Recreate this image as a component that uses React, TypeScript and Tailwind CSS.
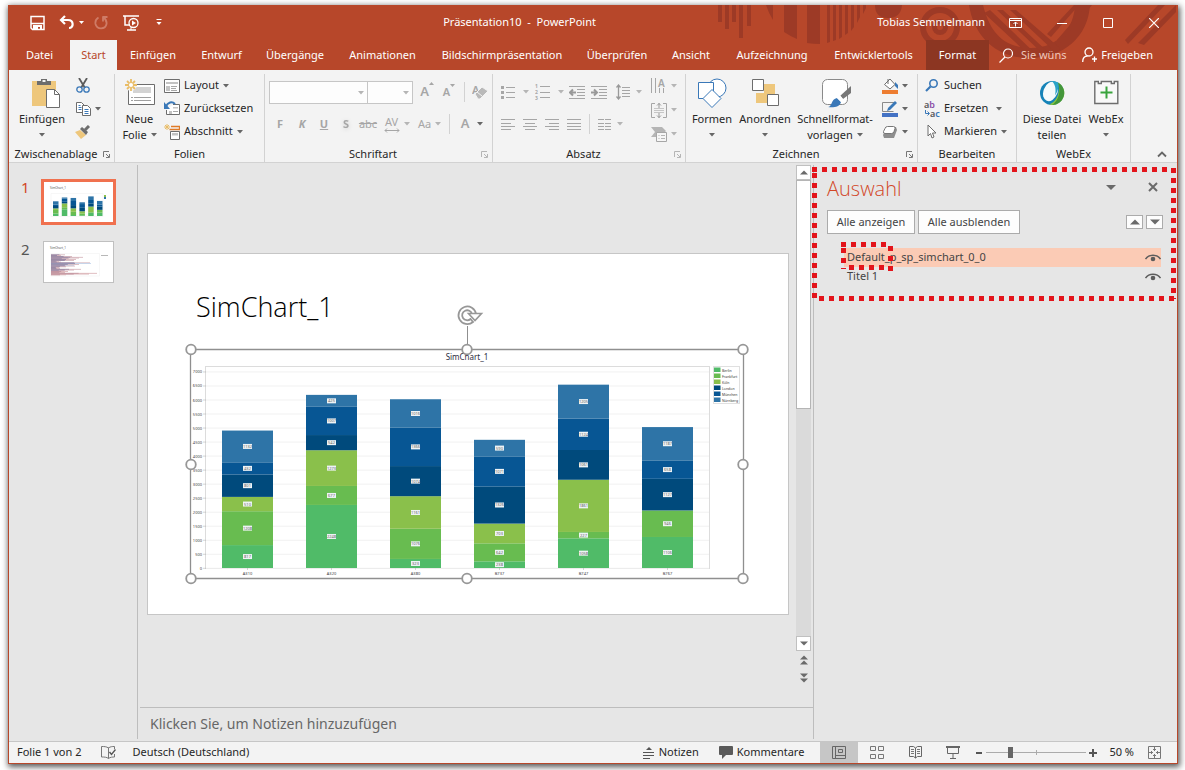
import React from 'react';
import clsx from 'clsx';

type IconProps = { w: number; h: number; children: React.ReactNode; className?: string };

function Icon({ w, h, children, className }: IconProps) {
  return (
    <svg width={w} height={h} viewBox={`0 0 ${w} ${h}`} fill="none" className={clsx('shrink-0', className)} aria-hidden="true">
      {children}
    </svg>
  );
}

function Caret({ className = 'text-[#666]' }: { className?: string }) {
  return (
    <Icon w={6} h={4} className={className}>
      <path d="M0 0h6L3 3.5z" fill="currentColor" />
    </Icon>
  );
}

/* ---------- Title bar ---------- */

function HeaderArt() {
  return (
    <svg className="absolute right-0 top-0 pointer-events-none" width="463" height="59" viewBox="715 5 463 59" fill="#9d3a26" aria-hidden="true">
      <path d="M719 5h4v17h-4zM726 5h4v24h-4zM733 5h4v17h-4zM740 5h4v33h-4zM748 5h4v21h-4z" />
      <path d="M767 5h7v15q-4-6-7-15zM785 5h13v34q-7-3-13-7zM808 5h13v39q-7 0-13-1z" />
      <path d="M828 5h3v37l-3 1zM834 5h3v35l-3 1zM840 5h3v32l-3 2zM846 5h3v28l-3 2zM852 5h3v22l-3 4zM858 5h3v12l-3 6zM864 5h3v3l-3 6z" />
      <path d="M876 5h27q-1 13-14 13T876 5z" />
      <circle cx="941" cy="27" r="17" fill="none" stroke="#9d3a26" strokeWidth="6" />
      <circle cx="941" cy="27" r="8" />
      <circle cx="941" cy="27" r="3" fill="#b7472a" />
      <path d="M970 5h14c6 24 18 42 46 43 29 1 45-20 46-43h15c-2 32-26 53-61 53-33 0-55-22-60-53z" />
      <path d="M985 13l6-3 48 46h-8zM998 10h6l47 44h-7zM1011 10h6l45 39-6 3z" />
      <path d="M1048 34l27-29h5l-28 32zM1058 40l30-35h5l-32 38z" />
      <path d="M1126 40l33-35h7l-37 39zM1139 43l38-38v7l-32 33z" />
    </svg>
  );
}

function TitleBar() {
  return (
    <div className="relative flex h-[35px] items-center text-[11px] text-white">
      <div className="flex items-center pl-5">
        <button aria-label="Speichern" className="w-[30px]">
          <Icon w={16} h={16}>
            <path d="M2 1.5h13v13H3.500L2 13z" stroke="#fff" strokeWidth="1.500" />
            <path d="M2 8.500h13" stroke="#fff" strokeWidth="1.500" />
            <path d="M4 10h9v5h-2v-3H9v3H4z" fill="#fff" />
          </Icon>
        </button>
        <button aria-label="Rückgängig" className="flex w-[35px] items-center gap-1">
          <Icon w={16} h={15}>
            <path d="M6 1L2 5l4 4M2.500 5H9c6 0 6 8 1 8" stroke="#fff" strokeWidth="2.200" />
          </Icon>
          <Icon w={6} h={3}>
            <path d="M0 0h5L2.500 3z" fill="#fff" />
          </Icon>
        </button>
        <button aria-label="Wiederholen" className="w-7">
          <Icon w={15} h={15}>
            <path d="M4.500 2.500C2 4 1 6 1.500 9c1.500 6 10 5.500 11 0 .5-3-1-5-3-6.500M9 1.500v5M8.500 2h5" stroke="#cf7b66" strokeWidth="1.800" />
          </Icon>
        </button>
        <button aria-label="Von Beginn an" className="w-[34px]">
          <Icon w={18} h={16}>
            <path d="M1 1h16M3 1v9h5M5 15h9" stroke="#fff" strokeWidth="1.500" />
            <circle cx="11.500" cy="8" r="4.500" stroke="#fff" strokeWidth="1.300" />
            <path d="M10 5.500L14 8l-4 2.500z" fill="#fff" />
            <path d="M9 12v3" stroke="#fff" />
          </Icon>
        </button>
        <button aria-label="Symbolleiste anpassen">
          <Icon w={6} h={7}>
            <path d="M.5.5h5" stroke="#fff" />
            <path d="M.5 3h5L3 6z" fill="#fff" />
          </Icon>
        </button>
      </div>
      <h1 className="flex-1 whitespace-pre text-center">Präsentation10  -  PowerPoint</h1>
      <div className="flex items-center justify-end">
        <span className="mr-2">Tobias Semmelmann</span>
        <button aria-label="Menüband-Anzeigeoptionen" className="flex w-[46px] justify-center">
          <Icon w={14} h={12}>
            <path d="M.5 1.500h12v9H.5zM.5 3.500h12M6.500 9.500V5M4.500 7l2-2 2 2" stroke="#fff" />
          </Icon>
        </button>
        <button aria-label="Minimieren" className="flex w-[46px] justify-center">
          <Icon w={10} h={10}>
            <path d="M0 5.500h10" stroke="#fff" />
          </Icon>
        </button>
        <button aria-label="Maximieren" className="flex w-[46px] justify-center">
          <Icon w={10} h={10}>
            <path d="M.5.5h9v9h-9z" stroke="#fff" />
          </Icon>
        </button>
        <button aria-label="Schließen" className="flex w-[46px] justify-center">
          <Icon w={10} h={10}>
            <path d="M0 0l10 10M10 0L0 10" stroke="#fff" strokeWidth="1.200" />
          </Icon>
        </button>
      </div>
    </div>
  );
}

const tabs = [
  { label: 'Datei', cls: 'w-[61px] text-white' },
  { label: 'Start', cls: 'w-[47px] bg-[#f3f3f3] text-[#b7472a]' },
  { label: 'Einfügen', cls: 'w-[72px] text-white' },
  { label: 'Entwurf', cls: 'w-[65px] text-white' },
  { label: 'Übergänge', cls: 'w-[82px] text-white' },
  { label: 'Animationen', cls: 'w-[93px] text-white' },
  { label: 'Bildschirmpräsentation', cls: 'w-[146px] text-white' },
  { label: 'Überprüfen', cls: 'w-[84px] text-white' },
  { label: 'Ansicht', cls: 'w-[64px] text-white' },
  { label: 'Aufzeichnung', cls: 'w-[98px] text-white' },
  { label: 'Entwicklertools', cls: 'w-[105px] text-white' },
  { label: 'Format', cls: 'w-[63px] bg-[#8c3622] text-white' },
];

function TabRow() {
  return (
    <nav className="relative flex h-[30px] items-stretch text-[11px]">
      {tabs.map((t) => (
        <button key={t.label} className={clsx('shrink-0 whitespace-nowrap', t.cls)}>
          {t.label}
        </button>
      ))}
      <button className="ml-2.5 flex items-center gap-2 whitespace-nowrap text-[#f0c8bc]">
        <Icon w={14} h={15}>
          <circle cx="9" cy="5.500" r="4.500" stroke="#fff" strokeWidth="1.200" />
          <path d="M6 9l-5.500 5.500" stroke="#fff" strokeWidth="1.300" />
        </Icon>
        Sie wüns
      </button>
      <button className="ml-auto mr-6 flex items-center gap-1 whitespace-nowrap text-white">
        <Icon w={15} h={16}>
          <circle cx="7" cy="5" r="4" stroke="#fff" strokeWidth="1.300" />
          <path d="M.7 15c0-4 2-6 5-6M10 12h5M12.500 9.500v5.500" stroke="#fff" strokeWidth="1.300" />
        </Icon>
        Freigeben
      </button>
    </nav>
  );
}

/* ---------- Ribbon ---------- */

function Group({ label, width, launcher, muted, children }: { label: string; width: string; launcher?: boolean; muted?: boolean; children: React.ReactNode }) {
  return (
    <section className={clsx('flex shrink-0 flex-col border-r border-[#d2d2d2]', width)}>
      <div className="flex h-[72px] items-start">{children}</div>
      <div className="flex h-4 items-center text-[#262626]">
        <span className="flex-1 text-center leading-4">{label}</span>
        {launcher && (
          <button aria-label={`${label} – Optionen`} className="mr-1">
            <Icon w={7} h={7} className={muted ? 'text-[#b5b5b5]' : 'text-[#777]'}>
              <path d="M.5 6V.5H6M3 3l3 3M6.500 3v3.500H3" stroke="currentColor" />
            </Icon>
          </button>
        )}
      </div>
    </section>
  );
}

function BigButton({ icon, lines, caret, width }: { icon: React.ReactNode; lines: string[]; caret?: 'below' | 'inline'; width: string }) {
  return (
    <button className={clsx('flex shrink-0 flex-col items-center whitespace-nowrap text-[#262626]', width)}>
      <span className="flex h-[37px] items-center justify-center">{icon}</span>
      {lines.map((line, i) => (
        <span key={line} className="flex h-4 items-center gap-1 leading-4">
          {line}
          {caret === 'inline' && i === lines.length - 1 && <Caret />}
        </span>
      ))}
      {caret === 'below' && (
        <span className="flex h-4 items-center">
          <Caret />
        </span>
      )}
    </button>
  );
}

function SmallButton({ icon, label, caret, name }: { icon: React.ReactNode; label?: string; caret?: boolean; name?: string }) {
  return (
    <button aria-label={name} className="flex h-[23px] items-center gap-1 whitespace-nowrap text-[#262626]">
      <span className="flex w-4 justify-center">{icon}</span>
      {label}
      {caret && <Caret />}
    </button>
  );
}

function Tool({ name, width = 'w-[22px]', children }: { name: string; width?: string; children: React.ReactNode }) {
  return (
    <button aria-label={name} className={clsx('flex h-6 shrink-0 items-center justify-center gap-1 text-[#a6a6a6]', width)}>
      {children}
    </button>
  );
}

function Divider() {
  return <span className="mx-1 h-5 w-px shrink-0 bg-[#d2d2d2]" />;
}

function ClipboardGroup() {
  return (
    <Group label="Zwischenablage" width="w-[106px]" launcher>
      <BigButton
        width="w-[66px]"
        caret="below"
        lines={['Einfügen']}
        icon={
          <Icon w={30} h={31} className="ml-2">
            <path d="M1 4h24v25H1z" fill="#eec77c" />
            <path d="M6 8V4h4V2h6v2h4v4z" fill="#6d6d6d" />
            <path d="M11.500 3h3v2h-3z" fill="#f3f3f3" />
            <path d="M15.500 12.500h8l5 5v13h-13z" fill="#fff" stroke="#6d6d6d" />
            <path d="M23.500 12.500v5h5" stroke="#6d6d6d" />
          </Icon>
        }
      />
      <div className="flex flex-col items-start">
        <SmallButton
          name="Ausschneiden"
          icon={
            <Icon w={14} h={15}>
              <path d="M3 0l6 10M11 0L5 10" stroke="#5c5c5c" strokeWidth="1.800" />
              <circle cx="3.500" cy="11.500" r="2.700" stroke="#3a78b8" strokeWidth="1.300" />
              <circle cx="10.500" cy="11.500" r="2.700" stroke="#3a78b8" strokeWidth="1.300" />
            </Icon>
          }
        />
        <div className="flex items-center gap-1">
          <SmallButton
            name="Kopieren"
            icon={
              <Icon w={15} h={14}>
                <path d="M.5.5h5l3 3v7h-8z" fill="#fff" stroke="#6d6d6d" />
                <path d="M2.500 3.500h2M2.500 5.500h3M2.500 7.500h3" stroke="#3a78b8" />
                <path d="M6.500 3.500h5l3 3v7h-8z" fill="#fff" stroke="#6d6d6d" />
                <path d="M8.500 7.500h4M8.500 9.500h4M8.500 11.500h4" stroke="#3a78b8" />
              </Icon>
            }
          />
          <Caret />
        </div>
        <SmallButton
          name="Format übertragen"
          icon={
            <Icon w={16} h={14}>
              <path d="M0 7l5-2 6 5-5 4z" fill="#eec77c" />
              <path d="M5 4l2-2 6 5-2 3z" fill="#6d6d6d" />
              <path d="M10 5l4-4" stroke="#6d6d6d" strokeWidth="3" />
            </Icon>
          }
        />
      </div>
    </Group>
  );
}

function SlidesGroup() {
  return (
    <Group label="Folien" width="w-[150px]">
      <BigButton
        width="w-[49px]"
        caret="inline"
        lines={['Neue', 'Folie']}
        icon={
          <Icon w={30} h={29}>
            <path d="M3.500 6.500h26v20h-26z" fill="#fff" stroke="#6d6d6d" />
            <path d="M8 9h18v6H8z" fill="#d3d3d3" />
            <path d="M6 19.500h2M9 19.500h17M6 22.500h2M9 22.500h17" stroke="#a0a0a0" />
            <circle cx="6" cy="7" r="6" fill="#f3f3f3" />
            <path d="M6 1v12M0 7h12M2 3l8 8M10 3l-8 8" stroke="#e9bd68" strokeWidth="1.800" />
            <circle cx="6" cy="7" r="2" fill="#fff" />
          </Icon>
        }
      />
      <div className="flex flex-col items-start">
        <SmallButton
          label="Layout"
          caret
          icon={
            <Icon w={16} h={14}>
              <path d="M.5.5h15v13H.5z" fill="#fff" stroke="#6d6d6d" />
              <path d="M2 3h12v2H2zM2 7h4v5H2z" fill="#c3c3c3" />
              <path d="M7 7.500h6M7 9.500h5M7 11.500h6" stroke="#a8a8a8" />
            </Icon>
          }
        />
        <SmallButton
          label="Zurücksetzen"
          icon={
            <Icon w={16} h={15}>
              <path d="M9 3.500h6.500v10h-13V9" fill="#fff" stroke="#6d6d6d" />
              <path d="M5 10h3v3H5zM9 6h5v1.500H9z" fill="#c3c3c3" />
              <path d="M9 10.500h5" stroke="#a8a8a8" />
              <path d="M1.500 6C4 1 8 0 11 3" stroke="#3a78b8" strokeWidth="2" />
              <path d="M0 1v7h6z" fill="#3a78b8" />
            </Icon>
          }
        />
        <SmallButton
          label="Abschnitt"
          caret
          icon={
            <Icon w={16} h={16}>
              <path d="M3 0v6M0 3h6M1 1l4 4M5 1L1 5" stroke="#e9bd68" />
              <path d="M7 2.500h8.500v3H5.500" stroke="#e07a26" strokeWidth="1.300" />
              <path d="M6.500 7.500h9v8h-9z" fill="#fff" stroke="#6d6d6d" />
              <path d="M8 9h6v2.500H8z" fill="#c3c3c3" />
            </Icon>
          }
        />
      </div>
    </Group>
  );
}

function FontGroup() {
  return (
    <Group label="Schriftart" width="w-[228px]" launcher muted>
      <div className="flex w-full flex-col pl-1">
        <div className="flex h-9 items-center">
          {['Schriftart', 'Schriftgrad'].map((name, i) => (
            <label key={name} className={clsx('relative -mr-px h-[23px] shrink-0', i ? 'w-[46px]' : 'w-[99px]')}>
              <select aria-label={name} disabled className="h-full w-full appearance-none border border-[#c6c6c6] bg-[#fdfdfd]" />
              <Caret className="absolute right-1 top-2.5 text-[#b5b5b5]" />
            </label>
          ))}
          <Tool name="Schriftgrad vergrößern" width="ml-1 w-[22px]">
            <span className="flex text-[13px] font-semibold">
              A<Icon w={5} h={4}><path d="M0 3h5L2.500 0z" fill="#a6a6a6" /></Icon>
            </span>
          </Tool>
          <Tool name="Schriftgrad verkleinern">
            <span className="flex text-[11px] font-semibold">
              A<Icon w={5} h={4}><path d="M0 0h5L2.500 3z" fill="#a6a6a6" /></Icon>
            </span>
          </Tool>
          <Divider />
          <Tool name="Formatierung löschen">
            <Icon w={17} h={22}>
              <text x="0" y="13" fontSize="11" fontWeight="600" fill="#a6a6a6" fontFamily="Noto Sans">A</text>
              <path d="M3 13l7-7 6 4-8 8H6z" fill="#b9b9b9" stroke="#f3f3f3" />
              <path d="M5 11l5 4" stroke="#f3f3f3" />
            </Icon>
          </Tool>
        </div>
        <div className="flex h-7 items-center text-[#a6a6a6]">
          <Tool name="Fett"><b>F</b></Tool>
          <Tool name="Kursiv"><b className="italic">K</b></Tool>
          <Tool name="Unterstrichen"><b className="underline">U</b></Tool>
          <Tool name="Schatten"><b className="drop-shadow-sm">S</b></Tool>
          <Tool name="Durchgestrichen"><s>abc</s></Tool>
          <Tool name="Zeichenabstand" width="w-[35px]">
            <span className="flex flex-col items-center leading-3">
              AV
              <Icon w={16} h={5}><path d="M1 2.500h14M3 .5l-2 2 2 2M13 .5l2 2-2 2" stroke="#a6a6a6" /></Icon>
            </span>
            <Caret className="text-[#b5b5b5]" />
          </Tool>
          <Tool name="Groß-/Kleinschreibung" width="w-[31px]">
            <span>Aa</span>
            <Caret className="text-[#b5b5b5]" />
          </Tool>
          <Divider />
          <Tool name="Schriftfarbe" width="w-[36px]">
            <span className="text-[13px] font-semibold">A</span>
            <Caret className="ml-1 text-[#666]" />
          </Tool>
        </div>
      </div>
    </Group>
  );
}

const alignments = [
  { name: 'Linksbündig', d: 'M0 .5h14M0 4.500h10M0 7.500h14M0 10.500h10' },
  { name: 'Zentriert', d: 'M0 .5h14M2 4.500h10M0 7.500h14M2 10.500h10' },
  { name: 'Rechtsbündig', d: 'M0 .5h14M4 4.500h10M0 7.500h14M4 10.500h10' },
  { name: 'Blocksatz', d: 'M0 .5h14M0 4.500h14M0 7.500h14M0 10.500h14' },
];

function ParagraphGroup() {
  return (
    <Group label="Absatz" width="w-[193px]" launcher muted>
      <div className="flex w-[158px] flex-col pl-1">
        <div className="flex h-9 items-center">
          <Tool name="Aufzählung" width="w-[35px]">
            <Icon w={14} h={15}>
              <path d="M5 2.500h9M5 7.500h9M5 12.500h9" stroke="#a6a6a6" />
              <path d="M0 1h3v3H0zM0 6h3v3H0zM0 11h3v3H0z" fill="#a6a6a6" />
            </Icon>
            <Caret className="ml-1 text-[#b5b5b5]" />
          </Tool>
          <Tool name="Nummerierung" width="w-[34px]">
            <Icon w={15} h={22}>
              <path d="M5 5.500h10M5 11.500h10M5 16.500h10" stroke="#a6a6a6" />
              <g fontSize="5" fontWeight="700" fill="#a6a6a6" fontFamily="Noto Sans">
                <text x="0" y="7">1</text>
                <text x="0" y="13">2</text>
                <text x="0" y="19">3</text>
              </g>
            </Icon>
            <Caret className="ml-1 text-[#b5b5b5]" />
          </Tool>
          <Tool name="Einzug verkleinern">
            <Icon w={16} h={13}>
              <path d="M0 .5h16M8 3.500h8M8 6.500h8M8 9.500h8M0 12.500h16" stroke="#a6a6a6" />
              <path d="M7 6.500H2M4 3.500l-3 3 3 3" stroke="#999" strokeWidth="2" />
            </Icon>
          </Tool>
          <Tool name="Einzug vergrößern">
            <Icon w={16} h={13}>
              <path d="M0 .5h16M8 3.500h8M8 6.500h8M8 9.500h8M0 12.500h16" stroke="#a6a6a6" />
              <path d="M0 6.500h5M3 3.500l3 3-3 3" stroke="#999" strokeWidth="2" />
            </Icon>
          </Tool>
          <Tool name="Zeilenabstand" width="w-[37px]">
            <Icon w={14} h={16}>
              <path d="M6 3.500h8M6 6.500h8M6 9.500h8M6 12.500h8" stroke="#a6a6a6" />
              <path d="M2.500 1v14M.5 3.500l2-2.500 2 2.500M.5 12.500l2 2.500 2-2.500" stroke="#999" strokeWidth="1.300" />
            </Icon>
            <Caret className="ml-0.5 text-[#b5b5b5]" />
          </Tool>
        </div>
        <div className="flex h-7 items-center">
          {alignments.map((a) => (
            <Tool key={a.name} name={a.name}>
              <Icon w={14} h={11}>
                <path d={a.d} stroke="#a6a6a6" />
              </Icon>
            </Tool>
          ))}
          <Divider />
          <Tool name="Spalten" width="w-[32px]">
            <Icon w={13} h={11}>
              <path d="M0 .5h6M7 .5h6M0 4.500h6M7 4.500h6M0 7.500h6M7 7.500h6M0 10.500h6M7 10.500h6" stroke="#a6a6a6" />
            </Icon>
            <Caret className="ml-0.5 text-[#b5b5b5]" />
          </Tool>
        </div>
      </div>
      <div className="flex flex-col">
        <Tool name="Textrichtung" width="w-[26px]">
          <Icon w={16} h={22}>
            <path d="M.5 3v15M4.500 3v15M8.500 13v5M12.500 13v5" stroke="#a6a6a6" />
            <text x="7" y="12" fontSize="10" fontWeight="600" fill="#a6a6a6" fontFamily="Noto Sans">A</text>
          </Icon>
          <Caret className="text-[#b5b5b5]" />
        </Tool>
        <Tool name="Text ausrichten" width="w-[26px]">
          <Icon w={16} h={15}>
            <path d="M4 .5H.5v14H4M12 .5h3.500v14H12" stroke="#a6a6a6" />
            <path d="M3 5.500h10M3 7.500h10M3 9.500h10" stroke="#c6c6c6" />
            <path d="M8 0v5M8 10v5M6 2.500L8 .5l2 2M6 12.500l2 2 2-2" stroke="#999" />
          </Icon>
          <Caret className="text-[#b5b5b5]" />
        </Tool>
        <Tool name="In SmartArt konvertieren" width="w-[26px]">
          <Icon w={16} h={15}>
            <path d="M0 0h11l4 4-3 3H5v3H0l4-5z" fill="#b5b5b5" />
            <path d="M5.500 5.500h10v9h-10z" fill="#f6f6f6" stroke="#a6a6a6" />
            <path d="M7.500 8.500h1M10 8.500h4M7.500 11.500h1M10 11.500h4" stroke="#b5b5b5" />
          </Icon>
          <Caret className="text-[#b5b5b5]" />
        </Tool>
      </div>
    </Group>
  );
}

function DrawingGroup() {
  return (
    <Group label="Zeichnen" width="w-[232px]" launcher>
      <BigButton
        width="w-[52px]"
        caret="below"
        lines={['Formen']}
        icon={
          <Icon w={30} h={30}>
            <circle cx="20" cy="10" r="9" fill="#fff" stroke="#3a78b8" />
            <path d="M1.500 4.500h15v16h-15z" fill="#fff" stroke="#3a78b8" />
            <path d="M15 11.500l9 9-9 9-9-9z" fill="#fff" stroke="#3a78b8" />
          </Icon>
        }
      />
      <BigButton
        width="w-[54px]"
        caret="below"
        lines={['Anordnen']}
        icon={
          <Icon w={27} h={28}>
            <path d="M12 5h11v10H12zM4 14h11v10H4z" fill="#eec77c" />
            <path d="M.5.5h11v11H.5zM15.500 15.500h11v11h-11z" fill="#fff" stroke="#6d6d6d" />
          </Icon>
        }
      />
      <BigButton
        width="w-[86px]"
        caret="inline"
        lines={['Schnellformat-', 'vorlagen']}
        icon={
          <Icon w={30} h={30} className="ml-1">
            <rect x=".5" y="1.500" width="25" height="25" rx="5" fill="#fff" stroke="#8a8a8a" />
            <path d="M29 8v7l-8 6-3-3z" fill="#777" />
            <path d="M6 29c4 0 3-8 9-9l4 4c-1 5-8 6-13 5z" fill="#3a78b8" />
            <path d="M15 20l3-3 3 4-2 3z" fill="#fff" />
          </Icon>
        }
      />
      <div className="flex flex-col pl-1">
        <SmallButton
          name="Fülleffekt"
          caret
          icon={
            <Icon w={16} h={16}>
              <path d="M2.500 6.500L8 1l5 5.500-5 4.500z" fill="#fff" stroke="#6d6d6d" />
              <path d="M6 6V1" stroke="#6d6d6d" />
              <path d="M13 4l3 3v4l-3-3z" fill="#3a78b8" />
              <path d="M0 12h16v4H0z" fill="#ed7d31" />
            </Icon>
          }
        />
        <SmallButton
          name="Formkontur"
          caret
          icon={
            <Icon w={16} h={16}>
              <path d="M12 1.500H.5v9h11" stroke="#8a8a8a" />
              <path d="M5 10l1-3 7-7 2 2-7 7z" fill="#3a78b8" />
              <path d="M0 12h16v4H0z" fill="#4472c4" />
            </Icon>
          }
        />
        <SmallButton
          name="Formeffekte"
          caret
          icon={
            <Icon w={16} h={14}>
              <path d="M5 2h9l1 3-3 8H2l-1-3z" fill="#8e8e8e" />
              <path d="M5.500 1.500h6q2 0 1.500 2l-1 3q-.5 2-2.500 2H3q-2 0-1.500-2l1.500-3q.5-2 2.500-2z" fill="#fff" stroke="#777" />
            </Icon>
          }
        />
      </div>
    </Group>
  );
}

function EditingGroup() {
  return (
    <Group label="Bearbeiten" width="w-[99px]">
      <div className="flex flex-col items-start pl-1.5">
        <SmallButton
          label="Suchen"
          icon={
            <Icon w={14} h={13}>
              <circle cx="8.500" cy="4.500" r="3.700" stroke="#3a78b8" strokeWidth="1.600" />
              <path d="M5.500 7.500L1 12" stroke="#3a78b8" strokeWidth="2.200" />
            </Icon>
          }
        />
        <div className="flex items-center gap-2">
          <SmallButton
            label="Ersetzen"
            icon={
              <Icon w={17} h={22}>
                <g fontSize="9" fontWeight="600" fontFamily="Noto Sans">
                  <text x="0" y="10" fill="#555">a<tspan fill="#8a4fa8">b</tspan></text>
                  <text x="6" y="19" fill="#555">a<tspan fill="#3a78b8">c</tspan></text>
                </g>
                <path d="M1.500 12v3.500H5M3.500 13.500l2 2-2 2" stroke="#3a78b8" />
              </Icon>
            }
          />
          <Caret />
        </div>
        <SmallButton
          label="Markieren"
          caret
          icon={
            <Icon w={10} h={15}>
              <path d="M1 1v11l2.500-2.500L5 14l2-1-1.500-4H9z" fill="#fff" stroke="#6d6d6d" />
            </Icon>
          }
        />
      </div>
    </Group>
  );
}

function WebExGroup() {
  return (
    <Group label="WebEx" width="w-[114px]">
      <BigButton
        width="w-[70px]"
        lines={['Diese Datei', 'teilen']}
        icon={
          <Icon w={26} h={26}>
            <circle cx="13" cy="13" r="12" fill="#1583b8" />
            <path d="M19 2.500A12 12 0 0 1 10 24.600c8-3 12-13 9-22.100z" fill="#8cc63f" />
            <path d="M19 2.500a12 12 0 0 1-6 22.500c7-5 9-14 6-22.500z" fill="#43963a" />
            <ellipse cx="11.500" cy="11.500" rx="7" ry="10" transform="rotate(22 11.500 11.500)" fill="#f4fafb" />
            <path d="M13 1a12 12 0 0 1 6 1.500c1 4 0 9-3 13 1-5 1-10-3-14.500z" fill="#2aa4c9" />
          </Icon>
        }
      />
      <BigButton
        width="w-[38px]"
        caret="below"
        lines={['WebEx']}
        icon={
          <Icon w={25} h={25}>
            <path d="M.8 1.500h3.500v2h3v-2h10v2h3v-2h3.500v22H.8z" fill="#fff" fillOpacity=".4" stroke="#6d6d6d" strokeWidth="1.400" />
            <path d="M6.500 12.500h12M12.500 6.500v12" stroke="#39a33c" strokeWidth="2" />
          </Icon>
        }
      />
    </Group>
  );
}

function Ribbon() {
  return (
    <div className="flex h-[93px] shrink-0 items-start border-b border-[#d2d2d2] bg-[#f3f3f3] pt-1 text-[11px]">
      <ClipboardGroup />
      <SlidesGroup />
      <FontGroup />
      <ParagraphGroup />
      <DrawingGroup />
      <EditingGroup />
      <WebExGroup />
      <button aria-label="Menüband reduzieren" className="mb-1 ml-auto mr-2.5 self-end">
        <Icon w={10} h={7}>
          <path d="M1 5.500l4-4 4 4" stroke="#666" strokeWidth="1.800" />
        </Icon>
      </button>
    </div>
  );
}

/* ---------- Slides ---------- */

const series = [
  { name: 'Berlin', color: '#50bb68' },
  { name: 'Frankfurt', color: '#68bc50' },
  { name: 'Köln', color: '#8ac04b' },
  { name: 'London', color: '#004a7c' },
  { name: 'München', color: '#075694' },
  { name: 'Nürnberg', color: '#2e74a7' },
];

const bars = [
  { type: 'A310', values: [817, 1208, 510, 801, 432, 1132] },
  { type: 'A320', values: [2248, 677, 1273, 542, 1007, 425] },
  { type: 'A380', values: [323, 1076, 1161, 1074, 1366, 1016] },
  { type: 'B737', values: [238, 642, 703, 1326, 1071, 590] },
  { type: 'B747', values: [1058, 227, 1861, 1061, 1124, 1205] },
  { type: 'B767', values: [1106, 946, 0, 1127, 658, 1187] },
];

function Stack({ values, x, base, width, scale, labels }: { values: number[]; x: number; base: number; width: number; scale: number; labels?: boolean }) {
  let y = base;
  return (
    <>
      {values.map((v, i) => {
        const h = v * scale;
        y -= h;
        if (!v) return null;
        return (
          <g key={series[i].name}>
            <rect x={x} y={y} width={width} height={h} fill={series[i].color} />
            {labels && (
              <>
                <rect x={x + width / 2 - 4.5} y={y + h / 2 - 2.5} width="9" height="5" fill="#eef3f5" />
                <text x={x + width / 2} y={y + h / 2 + 1.5} fontSize="4" textAnchor="middle" fill="#666">{v}</text>
              </>
            )}
          </g>
        );
      })}
    </>
  );
}

const handles = [
  [192, 349], [468, 349], [744, 349],
  [192, 464], [744, 464],
  [192, 578], [468, 578], [744, 578],
];

function SimChart() {
  const ticks = Array.from({ length: 15 }, (_, i) => i * 500);
  return (
    <svg className="absolute left-[37px] top-[50px]" width="566" height="281" viewBox="186 304 566 281" fontFamily="Noto Sans" role="img" aria-label="SimChart_1">
      <rect x="206.500" y="366.500" width="504" height="202" fill="#fff" stroke="#dcdcdc" />
      {ticks.map((t) => {
        const y = 568.3 - t * 0.02805;
        return (
          <g key={t}>
            <path d={`M207 ${y}h503`} stroke="#f1f1f1" />
            <path d={`M204 ${y}h3`} stroke="#aaa" strokeWidth=".5" />
            <text x="203" y={y + 1.5} fontSize="4" textAnchor="end" fill="#444">{t}</text>
          </g>
        );
      })}
      {bars.map((b, i) => (
        <g key={b.type}>
          <Stack values={b.values} x={223 + i * 84} base={568} width={51} scale={0.02805} labels />
          <path d={`M${248.5 + i * 84} 568v2`} stroke="#aaa" strokeWidth=".5" />
          <text x={248.5 + i * 84} y="575" fontSize="4" textAnchor="middle" fill="#444">{b.type}</text>
        </g>
      ))}
      <rect x="714.500" y="366.500" width="26" height="37" fill="#fff" stroke="#e0e0e0" />
      {series.map((s, i) => (
        <g key={s.name}>
          <rect x="715" y={367.5 + i * 6} width="6.500" height="4.500" fill={s.color} />
          <text x="723" y={371.5 + i * 6} fontSize="3.500" fill="#333">{s.name}</text>
        </g>
      ))}
      <text x="468" y="360" fontSize="8" textAnchor="middle" fill="#2c2c40">SimChart_1</text>
      <path d="M191.500 349.500h553v229h-553z" fill="none" stroke="#8f8f8f" strokeWidth="1.300" />
      <path d="M468.500 326v20" stroke="#8f8f8f" />
      {handles.map(([x, y]) => (
        <circle key={`${x}-${y}`} cx={x} cy={y + 0.5} r="4.800" fill="#fff" stroke="#979797" strokeWidth="1.800" />
      ))}
      {/* rotation handle */}
      <path d="M477 314a8.800 8.800 0 1 0-3 8l-2.500-3a5 5 0 1 1 1.500-5" fill="#fff" stroke="#979797" strokeWidth="1.800" />
      <path d="M469.500 313.500h13l-6.500 7z" fill="#fff" stroke="#979797" strokeWidth="1.600" />
    </svg>
  );
}

const flights = [14, 10, 21, 32, 28, 18, 25, 23, 8, 10, 39, 40, 28, 23, 24, 15, 8, 9, 30, 23, 13, 17, 14, 46, 38, 15];

function Thumbnails() {
  return (
    <aside aria-label="Folien" className="my-0.5 flex w-[129px] shrink-0 flex-col gap-4 border-r border-[#bdbdbd] pl-3 pt-3.5">
      <button className="flex items-start gap-3 text-[#d24726]">
        <span className="w-2 text-[15px] leading-4">1</span>
        <span className="h-[46px] w-[75px] border-[3px] border-[#f0714f] bg-white">
          <svg width="69" height="40" viewBox="44 182 69 40" aria-hidden="true">
            <text x="50" y="189" fontSize="3" fill="#555">SimChart_1</text>
            <path d="M51 193.500h52v23H51z" fill="none" stroke="#eee" strokeWidth=".5" />
            {bars.map((b, i) => (
              <Stack key={b.type} values={b.values} x={53 + i * 8.8} base={216} width={5.5} scale={0.003} />
            ))}
            <path d="M104 195h2v2h-2z" fill="#8ac04b" />
            <path d="M104 197h2v2h-2z" fill="#2e74a7" />
          </svg>
        </span>
      </button>
      <button className="flex items-start gap-[14px] text-[#555]">
        <span className="w-2 text-[15px] leading-4">2</span>
        <span className="h-[42px] w-[71px] border border-[#c0c0c0] bg-white">
          <svg width="69" height="40" viewBox="44 242 69 40" aria-hidden="true">
            <text x="50" y="249" fontSize="3" fill="#555">SimChart_1</text>
            <path d="M51 253.500h48.500v22.500H51z" fill="none" stroke="#eee" strokeWidth=".5" />
            {flights.map((w, i) => (
              <g key={i}>
                <rect x="51" y={254.5 + i * 0.8} width={w} height=".7" fill={i > 20 ? '#d3a3a7' : i === 11 || i === 13 ? '#b4cbe8' : '#cda5ad'} />
                <rect x="51" y={254.5 + i * 0.8} width={w * 0.6} height=".7" fill={i > 20 ? '#b98a98' : '#84799d'} />
              </g>
            ))}
            <path d="M101 255.500h7" stroke="#999" strokeWidth=".7" />
          </svg>
        </span>
      </button>
    </aside>
  );
}

function Arrow({ up }: { up?: boolean }) {
  return (
    <Icon w={8} h={5}>
      <path d={up ? 'M0 4.500h8L4 .5z' : 'M0 .5h8l-4 4z'} fill="#6a6a6a" />
    </Icon>
  );
}

function Editor() {
  return (
    <section className="my-0.5 flex min-w-0 flex-1 flex-col border-r border-[#bdbdbd]">
      <div className="flex min-h-0 flex-1">
        <div className="flex min-w-0 flex-1 items-center justify-center pb-1 pl-0.5">
          <div className="relative h-[362px] w-[642px] shrink-0 border border-[#c6c6c6] bg-white">
            <h2 className="absolute left-12 top-[35px] font-['Open_Sans'] text-[27px] font-light leading-9 text-black">SimChart_1</h2>
            <SimChart />
          </div>
        </div>
        <div className="flex w-[17px] shrink-0 flex-col items-start bg-[#e6e6e6] pb-5">
          <div className="flex min-h-0 w-[15px] flex-1 flex-col bg-[#dadada]">
            <button aria-label="Nach oben" className="flex h-[15px] shrink-0 items-center justify-center border border-[#c0c0c0] bg-white">
              <Arrow up />
            </button>
            <div className="h-[229px] border border-[#b5b5b5] bg-white" />
            <button aria-label="Nach unten" className="mt-auto flex h-[15px] shrink-0 items-center justify-center border border-[#c0c0c0] bg-white">
              <Arrow />
            </button>
          </div>
          <button aria-label="Vorherige Folie" className="flex h-[18px] w-[15px] flex-col items-center justify-center">
            <Arrow up />
            <Arrow up />
          </button>
          <button aria-label="Nächste Folie" className="flex h-[18px] w-[15px] flex-col items-center justify-center">
            <Arrow />
            <Arrow />
          </button>
        </div>
      </div>
      <div className="ml-0.5 h-8 border-t border-[#bdbdbd]">
        <input
          aria-label="Notizen"
          placeholder="Klicken Sie, um Notizen hinzuzufügen"
          className="h-full w-full bg-transparent px-2.5 text-sm placeholder:text-[#666] focus:outline-none"
        />
      </div>
    </section>
  );
}

/* ---------- Selection pane ---------- */

function Eye() {
  return (
    <Icon w={16} h={8}>
      <path d="M.5 5C4 0 12 0 15.500 5" stroke="#5c5c5c" strokeWidth="1.500" />
      <circle cx="8" cy="5" r="2.300" fill="#5c5c5c" />
    </Icon>
  );
}

function OrderArrow({ up }: { up?: boolean }) {
  return (
    <Icon w={10} h={6}>
      <path d={up ? 'M0 5.500h10l-5-5z' : 'M0 .5h10l-5 5z'} fill="#6a6a6a" />
    </Icon>
  );
}

const objects = [
  { name: 'Default_p_sp_simchart_0_0', selected: true },
  { name: 'Titel 1', selected: false },
];

function SelectionPane() {
  return (
    <aside className="relative flex w-[363px] shrink-0 flex-col pt-3 text-[11px] text-[#444]">
      <svg className="pointer-events-none absolute -left-0.5 top-1 z-10" width="366" height="140" viewBox="812 167 366 140" fill="none" stroke="#e3141b" strokeWidth="5" aria-hidden="true">
        <path d="M812 169.500h360" strokeDasharray="5 5" />
        <path d="M814.500 173v126M1173.500 168v131" strokeDasharray="5 5" />
        <path d="M819 298.500h359" strokeDasharray="5 5" />
        <path d="M841 244.500h45M843.500 248v21M849 267.500h35M890.500 246v25" strokeDasharray="5 5" />
      </svg>
      <header className="flex h-7 items-center pl-[13px] pr-[17px]">
        <h2 className="flex-1 font-['Open_Sans'] text-xl font-light text-[#d24726]">Auswahl</h2>
        <button aria-label="Aufgabenbereichsoptionen" className="mb-1 mr-8">
          <Icon w={10} h={5}>
            <path d="M0 0h10L5 5z" fill="#6a6a6a" />
          </Icon>
        </button>
        <button aria-label="Bereich schließen" className="mb-1 mr-0.5">
          <Icon w={10} h={10}>
            <path d="M1 1l8 8M9 1L1 9" stroke="#6a6a6a" strokeWidth="2" />
          </Icon>
        </button>
      </header>
      <div className="mt-[7px] flex items-center pl-[13px] pr-[14px]">
        <button className="h-6 w-[88px] border border-[#ababab] bg-[#fdfdfd]">Alle anzeigen</button>
        <button className="ml-[3px] h-6 w-[102px] border border-[#ababab] bg-[#fdfdfd]">Alle ausblenden</button>
        <button aria-label="Eine Ebene nach vorne" className="ml-auto flex h-[14px] w-[17px] items-center justify-center border border-[#ababab] bg-[#fdfdfd]">
          <OrderArrow up />
        </button>
        <button aria-label="Eine Ebene nach hinten" className="ml-[3px] flex h-[14px] w-[17px] items-center justify-center border border-[#ababab] bg-[#fdfdfd]">
          <OrderArrow />
        </button>
      </div>
      <ul className="ml-[30px] mr-4 mt-3.5">
        {objects.map((o) => (
          <li key={o.name} className={clsx('flex h-[19px] items-center justify-between pl-[3px]', o.selected && 'bg-[#fbcbb5]')}>
            {o.name}
            <button aria-label={`${o.name} ausblenden`}>
              <Eye />
            </button>
          </li>
        ))}
      </ul>
    </aside>
  );
}

/* ---------- Status bar ---------- */

function StatusBar() {
  return (
    <footer className="flex h-[22px] shrink-0 items-center border-t border-[#c6c6c6] bg-[#f3f3f3] text-[11px] text-[#262626]">
      <span className="ml-2">Folie 1 von 2</span>
      <button aria-label="Rechtschreibung" className="ml-5">
        <Icon w={15} h={13}>
          <path d="M7.500 1.500v11M7.500 2C5.500.5 3 .5.5.5v10.500c3 0 5 0 7 1.500 2-1.500 4-1.500 6-1.500V8M7.500 2C9.500.5 11 .5 13.500.5V3" stroke="#777" />
          <path d="M8.500 6l2 2.500 4-5" stroke="#555" strokeWidth="1.400" />
        </Icon>
      </button>
      <button className="ml-4">Deutsch (Deutschland)</button>
      <div className="ml-auto flex h-full items-center">
        <button className="flex items-center gap-1">
          <Icon w={12} h={13}>
            <path d="M0 6.500h11M0 9.500h11M0 12.500h7" stroke="#555" />
            <path d="M3 4h6L6 1z" fill="#555" />
          </Icon>
          Notizen
        </button>
        <button className="ml-5 mr-4 flex items-center gap-1">
          <Icon w={14} h={14}>
            <path d="M1 0h12q1 0 1 1v7q0 1-1 1H7l-4 4V9H1q-1 0-1-1V1q0-1 1-1z" fill="#5a5a5a" />
          </Icon>
          Kommentare
        </button>
        <button aria-label="Normal" className="flex h-full w-[38px] items-center justify-center bg-[#c6c6c6]">
          <Icon w={14} h={13}>
            <path d="M.5.5h13v12H.5zM3.500.5v12M3.500 9.500h10M6.500 3.500h4v3h-4z" stroke="#666" />
          </Icon>
        </button>
        <button aria-label="Foliensortierung" className="flex w-[38px] justify-center">
          <Icon w={14} h={13}>
            <path d="M.5.500h5v4h-5zM8.500.500h5v4h-5zM.5 8.500h5v4h-5zM8.500 8.500h5v4h-5z" stroke="#777" />
          </Icon>
        </button>
        <button aria-label="Leseansicht" className="flex w-[38px] justify-center">
          <Icon w={13} h={13}>
            <path d="M6.500 2v10M.5.500h4l2 1.500 2-1.500h4v10h-4l-2 1.500-2-1.500h-4z" stroke="#666" />
            <path d="M2 3.500h3M2 5.500h3M2 7.500h3M8 3.500h3M8 5.500h3M8 7.500h3" stroke="#777" />
          </Icon>
        </button>
        <button aria-label="Bildschirmpräsentation" className="flex w-[38px] justify-center">
          <Icon w={14} h={13}>
            <path d="M0 1h14" stroke="#666" strokeWidth="2" />
            <path d="M1.500 2v5.500h11V2M7 8v4M4 12.500h6" stroke="#666" />
          </Icon>
        </button>
        <button aria-label="Verkleinern" className="mx-1">
          <Icon w={6} h={2}>
            <path d="M0 1h6" stroke="#555" strokeWidth="2" />
          </Icon>
        </button>
        <div className="relative flex w-[100px] items-center">
          <span className="absolute left-1/2 h-[5px] w-px bg-[#ababab]" />
          <input
            type="range"
            aria-label="Zoom"
            min={0}
            max={100}
            defaultValue={23}
            className="relative h-px w-full appearance-none bg-[#ababab] [&::-webkit-slider-thumb]:h-[11px] [&::-webkit-slider-thumb]:w-[5px] [&::-webkit-slider-thumb]:appearance-none [&::-webkit-slider-thumb]:bg-[#666]"
          />
        </div>
        <button aria-label="Vergrößern" className="ml-[3px]">
          <Icon w={8} h={8}>
            <path d="M0 4h8M4 0v8" stroke="#555" strokeWidth="2" />
          </Icon>
        </button>
        <button className="ml-3">50 %</button>
        <button aria-label="An Fenster anpassen" className="ml-3.5 mr-4">
          <Icon w={13} h={13}>
            <path d="M.5.5h12v12H.5z" stroke="#777" />
            <path d="M6.500 1v4M6.500 8v4M1 6.500h4M8 6.500h4M5 3.500h3M5 9.500h3M3.500 5v3M9.500 5v3" stroke="#777" />
          </Icon>
        </button>
      </div>
    </footer>
  );
}

export default function App() {
  return (
    <div className="flex h-screen bg-white pb-[6px] pl-2 pr-[7px] pt-[5px] font-['Noto_Sans',sans-serif]">
      <div className="flex min-w-0 flex-1 flex-col overflow-hidden border-x border-b border-[#b7472a] bg-[#e6e6e6] shadow-[1px_2px_6px_1px_rgba(0,0,0,0.65)]">
        <header className="relative shrink-0 bg-[#b7472a]">
          <HeaderArt />
          <TitleBar />
          <TabRow />
        </header>
        <Ribbon />
        <main className="flex min-h-0 flex-1">
          <Thumbnails />
          <Editor />
          <SelectionPane />
        </main>
        <StatusBar />
      </div>
    </div>
  );
}
